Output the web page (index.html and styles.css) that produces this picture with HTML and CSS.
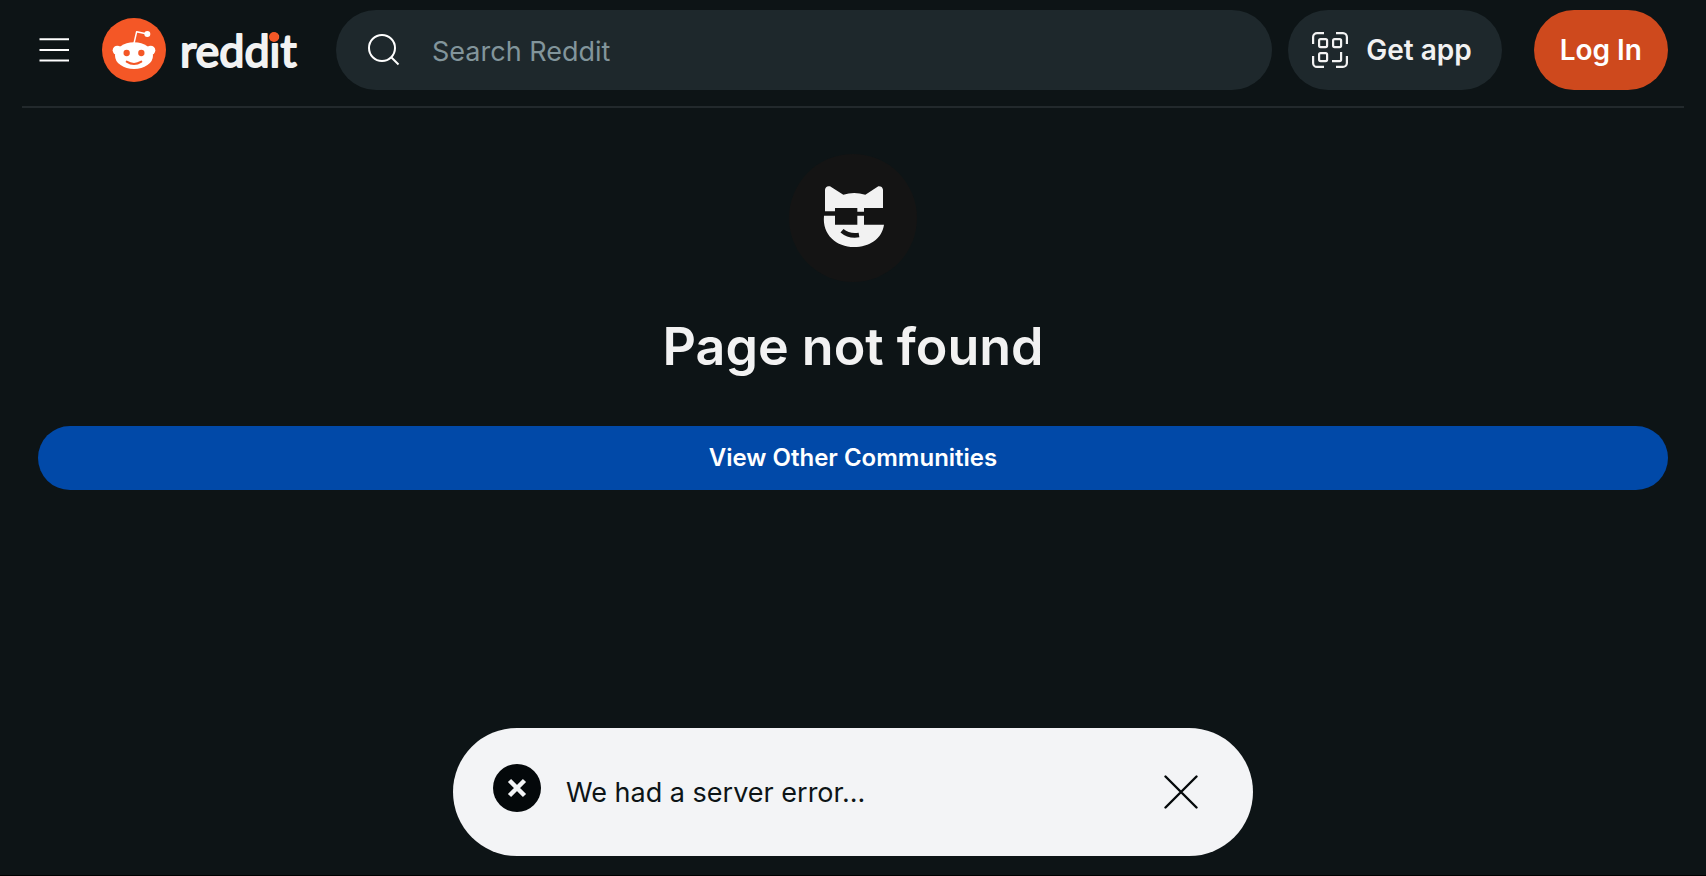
FILE: index.html
```html
<!DOCTYPE html>
<html lang="en">
<head>
<meta charset="utf-8">
<meta name="viewport" content="width=device-width, initial-scale=1">
<title>Page not found</title>
<link rel="stylesheet" href="styles.css">
</head>
<body>
<header class="topbar">
  <button class="menu" type="button" aria-label="Open menu">
    <svg width="32" height="32" viewBox="0 0 32 32" fill="none" stroke="currentColor" stroke-width="2"><path d="M1.500 5.300h29.500M1.500 16h29.500M1.500 26.500h29.500"/></svg>
  </button>
  <a class="brand" href="#" aria-label="Home">
    <svg class="brand-mark" width="64" height="64" viewBox="0 0 192 192">
      <circle cx="96" cy="96" r="96" fill="#f45726"/>
      <g fill="#fff">
        <circle cx="46" cy="97" r="14"/><circle cx="146" cy="97" r="14"/>
        <ellipse cx="96" cy="113" rx="57" ry="40"/>
        <circle cx="136" cy="48" r="9"/>
      </g>
      <path d="M96 76l8-35 32 7" fill="none" stroke="#fff" stroke-width="4.500" stroke-linejoin="round"/>
      <circle cx="74" cy="105" r="9.500" fill="#f45726"/><circle cx="118" cy="105" r="9.500" fill="#f45726"/>
      <path d="M74 131q22 14 44 0" fill="none" stroke="#f45726" stroke-width="6" stroke-linecap="round"/>
    </svg>
    <svg class="brand-word" width="124" height="72" viewBox="0 0 124 72">
      <text class="word" x="0" y="53">reddit</text>
      <circle cx="94" cy="23" r="5" fill="#f45726"/>
    </svg>
  </a>
  <label class="search">
    <svg width="32" height="32" viewBox="0 0 32 32" fill="none" stroke="#fff" stroke-width="2"><circle cx="14" cy="14" r="13"/><path d="M23 23l7.500 7.500"/></svg>
    <input type="text" placeholder="Search Reddit" aria-label="Search Reddit">
  </label>
  <button class="pill app" type="button">
    <svg width="36" height="36" viewBox="0 0 36 36" fill="none" stroke="currentColor" stroke-width="2.200">
      <path d="M1.100 12V5a4 4 0 0 1 4-3.900H12M24 1.100h7a4 4 0 0 1 3.900 4V12M34.900 24v7a4 4 0 0 1-4 3.900H24M12 34.900H5a4 4 0 0 1-3.900-4V24"/>
      <rect x="7.100" y="7.100" width="8" height="8" rx="1.500"/><rect x="21.100" y="7.100" width="8" height="8" rx="1.500"/><rect x="7.100" y="21.100" width="8" height="8" rx="1.500"/>
      <path d="M29.100 20v7.500q0 1.600-1.600 1.600H20"/>
    </svg>
    <span>Get app</span>
  </button>
  <button class="pill login" type="button">Log In</button>
</header>

<main class="missing">
  <svg class="avatar" width="128" height="128" viewBox="27 42 384 384">
    <circle cx="219" cy="234" r="192" fill="#141414"/>
    <path fill="#f2f2f2" d="M135 214V149Q137 136 150 139L190 164Q222 154 256 164L295 139Q307 138 309 149V204H252V215H232V204H165V214Z"/>
    <path fill="#f2f2f2" d="M132 227H165V254H232V227H252V254H312C306 296 268 321 222 321C170 321 126 284 132 227Z"/>
    <path d="M186 272Q207 290 237 285" fill="none" stroke="#141414" stroke-width="14"/>
  </svg>
  <h1>Page not found</h1>
  <a class="communities" href="#">View Other Communities</a>
</main>

<div class="toast" role="alert">
  <svg class="toast-icon" width="48" height="48" viewBox="0 0 48 48"><circle cx="24" cy="24" r="24" fill="#04080a"/><path d="M16.500 16.500l15 15M31.500 16.500l-15 15" stroke="#f3f4f6" stroke-width="4.500"/></svg>
  <p>We had a server error...</p>
  <button class="close" type="button" aria-label="Close">
    <svg width="34" height="34" viewBox="0 0 34 34" stroke="#04080a" stroke-width="2.400" stroke-linecap="round"><path d="M1.500 1.500l31 31M32.500 1.500l-31 31"/></svg>
  </button>
</div>
</body>
</html>
```
FILE: styles.css
```css
* { box-sizing: border-box; }

body {
  margin: 0;
  min-height: 100vh;
  background: #0d1416;
  border-bottom: 1px solid #000;
  color: #f2f2f2;
  font-family: Inter, "Liberation Sans", sans-serif;
  font-size: 27px;
}

svg { display: block; flex: none; }

button {
  border: 0;
  background: none;
  padding: 0;
  color: inherit;
  font: inherit;
  cursor: pointer;
}

.topbar {
  display: flex;
  align-items: center;
  margin: 0 22px;
  padding: 10px 16px 16px;
  border-bottom: 2px solid #22292c;
}

.menu { margin-right: 32px; color: #fff; }

.brand {
  display: flex;
  align-items: center;
  gap: 14px;
  margin-right: 32px;
}

.word {
  font-family: Lato, sans-serif;
  font-size: 45px;
  fill: #f2f2f2;
  stroke: #f2f2f2;
  stroke-width: 2px;
  stroke-linejoin: round;
}

.search {
  display: flex;
  flex: 1;
  align-items: center;
  gap: 32px;
  min-width: 0;
  height: 80px;
  margin-right: 16px;
  padding: 0 32px;
  border-radius: 40px;
  background: #1e282c;
}

.search input {
  flex: 1;
  min-width: 0;
  padding: 2px 0 0;
  border: 0;
  outline: 0;
  background: none;
  color: #f2f2f2;
  font: inherit;
}

.search input::placeholder { color: #82959b; opacity: 1; }

.pill {
  display: flex;
  align-items: center;
  height: 80px;
  border-radius: 40px;
  font-size: 28px;
  font-weight: 600;
  white-space: nowrap;
}

.app {
  gap: 18px;
  margin-right: 32px;
  padding: 0 30px 0 24px;
  background: #1e282c;
}

.login {
  padding: 0 26px;
  background: #ce491d;
  color: #fff;
}

.missing {
  display: flex;
  flex-direction: column;
  align-items: center;
  padding: 46px 38px 0;
}

h1 {
  margin: 33px 0 47px;
  font-size: 52px;
  font-weight: 600;
  line-height: 64px;
}

.communities {
  align-self: stretch;
  border-radius: 32px;
  background: #0149a8;
  color: #fff;
  font-size: 24px;
  font-weight: 600;
  line-height: 64px;
  text-align: center;
  text-decoration: none;
}

.toast {
  position: fixed;
  bottom: 20px;
  left: 50%;
  display: flex;
  align-items: center;
  width: 800px;
  max-width: 100%;
  height: 128px;
  padding: 0 55px 0 40px;
  border-radius: 64px;
  background: #f3f4f6;
  color: #0d1416;
  transform: translateX(-50%);
}

.toast-icon { margin: 0 25px 8px 0; }

.toast p { flex: 1; margin: 0; }
```
